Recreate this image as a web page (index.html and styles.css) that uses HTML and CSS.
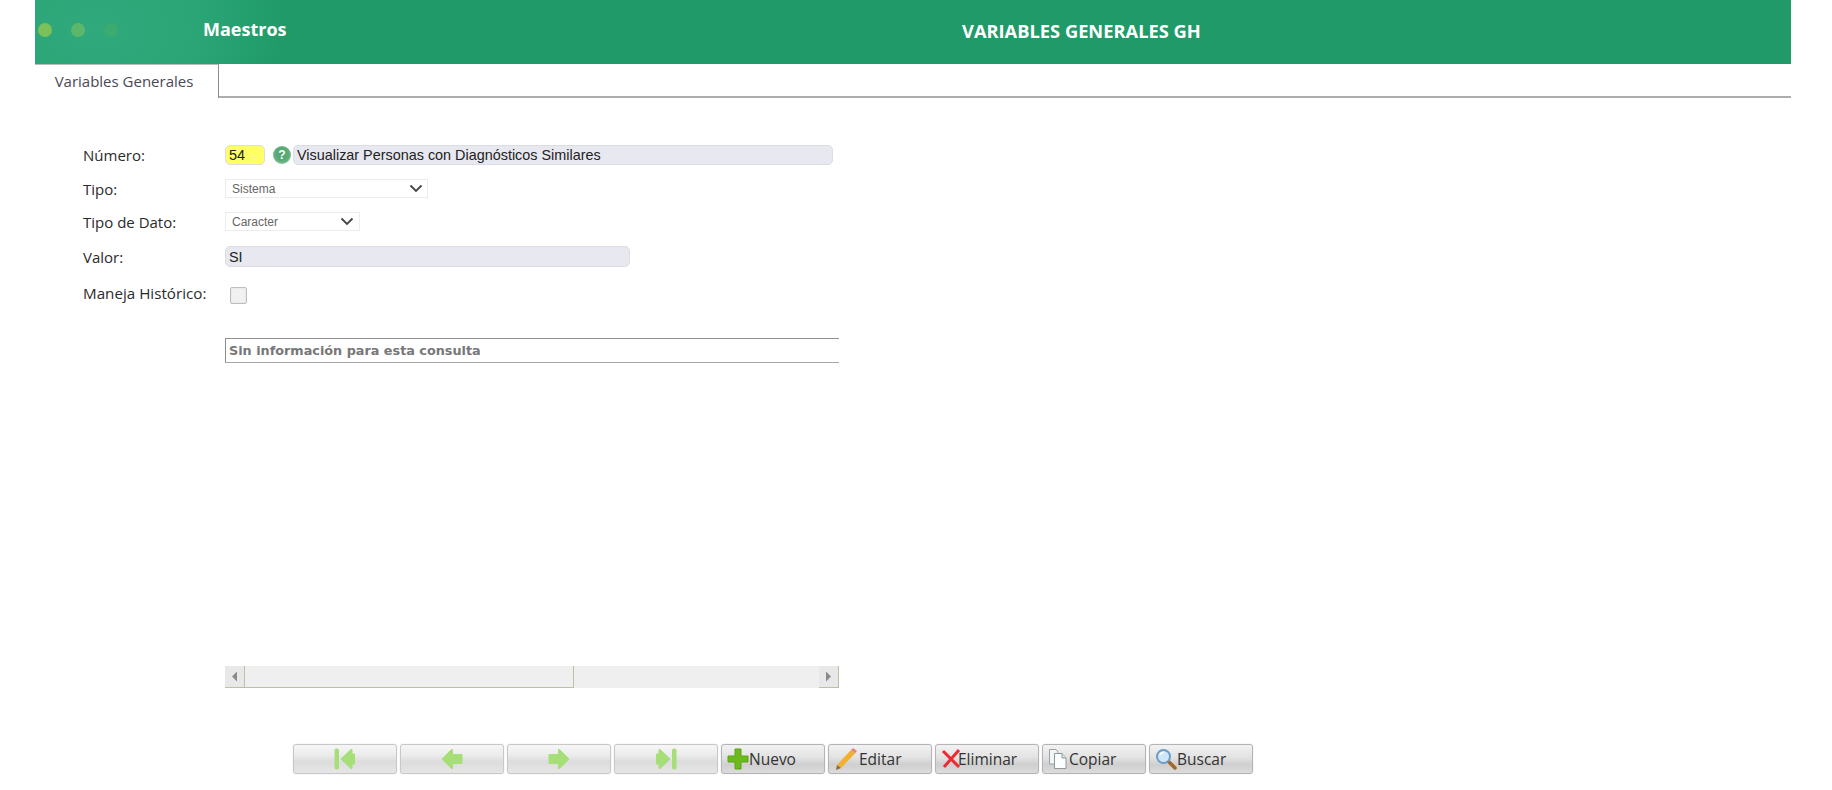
FILE: index.html
```html
<!DOCTYPE html>
<html lang="es">
<head>
    <meta charset="UTF-8">
    <title>Variables Generales GH</title>
    <link rel="stylesheet" href="styles.css">
</head>
<body>
    <div class="page">
        <div class="header">
            <div class="dots">
                <span class="dot dot1"></span>
                <span class="dot dot2"></span>
                <span class="dot dot3"></span>
            </div>
            <div class="module">Maestros</div>
            <div class="title">VARIABLES GENERALES GH</div>
        </div>

        <div class="tabs">
            <div class="tab">Variables Generales</div>
            <div class="tab-fill"></div>
        </div>

        <div class="form">
            <div class="row row-numero">
                <label class="lbl">Número:</label>
                <input class="txt txt-num" type="text" value="54">
                <span class="help">?</span>
                <input class="txt txt-name" type="text" value="Visualizar Personas con Diagnósticos Similares">
            </div>
            <div class="row row-tipo">
                <label class="lbl">Tipo:</label>
                <div class="sel sel-tipo">Sistema
                    <svg class="chev" width="14" height="9" viewBox="0 0 14 9"><path d="M1.5 1.5 L7 7 L12.5 1.5" fill="none" stroke="#444" stroke-width="1.8"/></svg>
                </div>
            </div>
            <div class="row row-dato">
                <label class="lbl">Tipo de Dato:</label>
                <div class="sel sel-dato">Caracter
                    <svg class="chev" width="14" height="9" viewBox="0 0 14 9"><path d="M1.5 1.5 L7 7 L12.5 1.5" fill="none" stroke="#444" stroke-width="1.8"/></svg>
                </div>
            </div>
            <div class="row row-valor">
                <label class="lbl">Valor:</label>
                <input class="txt txt-valor" type="text" value="SI">
            </div>
            <div class="row row-hist">
                <label class="lbl lbl-hist">Maneja Histórico:</label>
                <span class="check"></span>
            </div>
        </div>

        <div class="grid-wrap">
            <div class="grid-box">Sin información para esta consulta</div>
            <div class="scrollbar">
                <div class="sb-btn sb-left"><svg width="7" height="11" viewBox="0 0 7 11"><path d="M6 0.5 V10.5 L1 5.5 Z" fill="#8a8a8a"/></svg></div>
                <div class="sb-thumb"></div>
                <div class="sb-track"></div>
                <div class="sb-btn sb-right"><svg width="7" height="11" viewBox="0 0 7 11"><path d="M1 0.5 V10.5 L6 5.5 Z" fill="#8a8a8a"/></svg></div>
            </div>
        </div>

        <div class="toolbar">
            <button class="btn"><svg width="22" height="22" viewBox="0 0 22 22"><rect x="0.5" y="0.5" width="4.5" height="21" rx="2" fill="#a6de78"/><path d="M7 11 L17 1.5 H18 V6 H20.5 V16 H18 V20.5 H17 Z" fill="#a6de78" stroke="#a6de78" stroke-linejoin="round"/></svg></button>
            <button class="btn"><svg width="22" height="22" viewBox="0 0 22 22"><path d="M1 11 L10.5 1.5 H11.5 V6.5 H21 V15.5 H11.5 V20.5 H10.5 Z" fill="#a6de78" stroke="#a6de78" stroke-linejoin="round"/></svg></button>
            <button class="btn"><svg width="22" height="22" viewBox="0 0 22 22"><path d="M21 11 L11.5 1.5 H10.5 V6.5 H1 V15.5 H10.5 V20.5 H11.5 Z" fill="#a6de78" stroke="#a6de78" stroke-linejoin="round"/></svg></button>
            <button class="btn"><svg width="22" height="22" viewBox="0 0 22 22"><rect x="17" y="0.5" width="4.5" height="21" rx="2" fill="#a6de78"/><path d="M15 11 L5 1.5 H4 V6 H1.5 V16 H4 V20.5 H5 Z" fill="#a6de78" stroke="#a6de78" stroke-linejoin="round"/></svg></button>
            <button class="btn btn-text"><svg width="22" height="22" viewBox="0 0 22 22"><path d="M8 1 H14 V8 H21 V14 H14 V21 H8 V14 H1 V8 H8 Z" fill="#6cba1e" stroke="#5aa514" stroke-width="1" stroke-linejoin="round"/></svg>Nuevo</button>
            <button class="btn btn-text btn-editar"><svg width="24" height="24" viewBox="0 0 24 24"><path d="M3 18 L17 3 L21 6.5 L7 21 Z" fill="#f0b030"/><path d="M3 18 L7 21 L2 23 Z" fill="#8a6a3a"/><path d="M17 3 L19 1 L23 4 L21 6.5 Z" fill="#e8857a"/></svg>Editar</button>
            <button class="btn btn-text btn-eliminar"><svg width="20" height="20" viewBox="0 0 20 20"><path d="M2 2 L18 18 M18 1 L3 18" fill="none" stroke="#ec2a34" stroke-width="3"/></svg>Eliminar</button>
            <button class="btn btn-text btn-copiar"><svg width="20" height="22" viewBox="0 0 20 22"><path d="M1.5 1.5 H8 L10 4 V16 H1.5 Z" fill="#f4f6f6" stroke="#9aa4a8"/><path d="M6.5 5.5 H14 L18 10 V20.5 H6.5 Z" fill="#fcfdfd" stroke="#8e989c"/><path d="M14 5.5 V10 H18" fill="#dde3e5" stroke="#8e989c"/></svg>Copiar</button>
            <button class="btn btn-text"><svg width="22" height="22" viewBox="0 0 22 22"><path d="M13 13 L20 20" stroke="#a0682a" stroke-width="3.5" stroke-linecap="round"/><circle cx="8.5" cy="8.5" r="6.5" fill="#cfe6f8" stroke="#6a9cc8" stroke-width="2"/><path d="M5 7 A4 4 0 0 1 9 4.5" fill="none" stroke="#fff" stroke-width="1.5"/></svg>Buscar</button>
        </div>
    </div>
</body>
</html>
```

FILE: styles.css
```css
* {
    box-sizing: border-box;
}
html, body {
    margin: 0;
    height: 100%;
    overflow: hidden;
    background: #fff;
}
body {
    font-family: "Open Sans", Arial, sans-serif;
    color: #333;
}
.page {
    margin-left: 35px;
    width: 1756px;
}

/* header */
.header {
    height: 64px;
    padding-bottom: 4px;
    display: flex;
    align-items: center;
    background: #1f9a68;
    background-image: radial-gradient(ellipse 190px 130px at 60px 30px, #30a97c 0%, #2ba576 55%, #1f9a68 100%);
    color: #fff;
    font-weight: 700;
    font-size: 18px;
}
.dots {
    display: flex;
    gap: 19px;
    width: 168px;
    padding-left: 3px;
}
.dot {
    width: 14px;
    height: 14px;
    border-radius: 50%;
}
.dot1 { background: #7cc05a; }
.dot2 { background: #5db76b; }
.dot3 { background: #3bab6f; }
.module {
    width: 759px;
    margin-top: -2px;
}
.title {
    white-space: nowrap;
    font-size: 18.3px;
}

/* tabs */
.tabs {
    height: 34px;
    display: flex;
}
.tab {
    width: 184px;
    background: #fff;
    border-right: 1px solid #8c8c8c;
    border-top: 1px solid #bbb;
    font-size: 15px;
    color: #4a4a55;
    text-align: center;
    line-height: 32px;
    padding-right: 5px;
}
.tab-fill {
    flex: 1;
    border-bottom: 2px solid #adadad;
}

/* form */
.form {
    padding: 47px 0 0 48px;
}
.row {
    display: flex;
    align-items: center;
}
.lbl {
    width: 142px;
    font-size: 15px;
    color: #2b2b2b;
}
.lbl-hist {
    margin-top: -4px;
    font-size: 15.2px;
}
.row-numero { height: 20px; margin-bottom: 14px; }
.row-tipo { height: 19px; margin-bottom: 14px; }
.row-dato { height: 19px; margin-bottom: 15px; }
.row-valor { height: 21px; margin-bottom: 19px; }
.row-hist { height: 17px; }

.txt {
    font-family: "Liberation Sans", Arial, sans-serif;
    font-size: 14.4px;
    color: #222;
    border: 1px solid #dcdce4;
    border-radius: 5px;
    background: #e8e8f0;
    padding: 0 2px 0 3px;
    height: 100%;
    outline: none;
}
.txt-num {
    width: 40px;
    background: #ffff66;
}
.help {
    width: 18px;
    height: 18px;
    margin: 0 2px 0 8px;
    border-radius: 50%;
    background: radial-gradient(circle at 50% 45%, #4f9f6c 0%, #5fae7a 55%, #c9e4d2 100%);
    color: #fff;
    font-family: "Liberation Sans", Arial, sans-serif;
    font-size: 12px;
    font-weight: 700;
    text-align: center;
    line-height: 18px;
}
.txt-name { width: 540px; }
.txt-valor { width: 405px; }

.sel {
    height: 100%;
    border: 1px solid #ececec;
    background: #fff;
    font-family: "Liberation Sans", Arial, sans-serif;
    font-size: 12px;
    color: #666;
    padding-left: 6px;
    display: flex;
    align-items: center;
    justify-content: space-between;
}
.sel-tipo { width: 203px; padding-right: 4px; }
.sel-dato { width: 135px; padding-right: 5px; }

.check {
    width: 17px;
    height: 17px;
    margin: 2px 0 0 5px;
    border: 1px solid #bdbdbd;
    border-radius: 2px;
    background: #f1f1f1;
    box-shadow: inset 0 0 2px #ddd;
}

/* consulta */
.grid-wrap {
    margin: 35px 0 0 190px;
    width: 614px;
}
.grid-box {
    height: 25px;
    border: 1px solid #8f8f8f;
    border-right: none;
    border-bottom-color: #a8a8a8;
    font-family: "DejaVu Sans", Verdana, sans-serif;
    font-weight: 700;
    font-size: 12.8px;
    color: #777;
    line-height: 24px;
    padding-left: 3px;
}
.scrollbar {
    margin-top: 303px;
    height: 22px;
    display: flex;
    background: #efefef;
}
.sb-btn {
    width: 20px;
    display: flex;
    align-items: center;
    justify-content: center;
    border-bottom: 1px solid #b9c2a4;
    background: #e8e8e8;
}
.sb-left { border-right: 1px solid #b9c2a4; }
.sb-right { border-right: 1px solid #b9c2a4; }
.sb-thumb {
    width: 329px;
    border-right: 1px solid #b9c2a4;
    border-bottom: 1px solid #b9c2a4;
}
.sb-track {
    flex: 1;
}

/* toolbar */
.toolbar {
    margin: 56px 0 0 258px;
    display: flex;
    gap: 3px;
}
.btn {
    width: 104px;
    height: 30px;
    padding: 0;
    display: flex;
    align-items: center;
    justify-content: center;
    border: 1px solid #c8c8c8;
    border-radius: 3px;
    background: linear-gradient(#f6f6f6 0%, #ececec 35%, #dcdcdc 60%, #e6e6e6 100%);
    box-shadow: 0 0 1px #bbb;
    font-family: "Open Sans", Arial, sans-serif;
    font-size: 15.5px;
    color: #333;
}
.btn-text {
    justify-content: flex-start;
    padding-left: 5px;
    background: linear-gradient(#f2f2f2 0%, #e2e2e2 45%, #cfcfcf 70%, #dcdcdc 100%);
    border-color: #b4b4b4;
}
.btn-editar svg {
    margin-right: 1px;
}
.btn-eliminar svg {
    margin-right: -3px;
}
.btn-copiar svg {
    margin-right: 1px;
}
```
